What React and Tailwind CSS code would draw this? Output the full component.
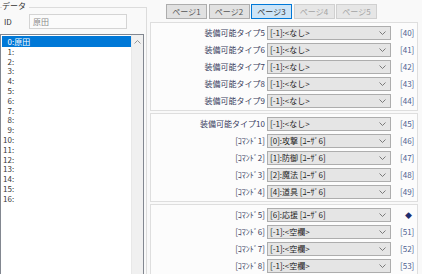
import React from "react";

const panels = [
  [
    ["装備可能タイプ5", "[-1]:<なし>", "[40]"],
    ["装備可能タイプ6", "[-1]:<なし>", "[41]"],
    ["装備可能タイプ7", "[-1]:<なし>", "[42]"],
    ["装備可能タイプ8", "[-1]:<なし>", "[43]"],
    ["装備可能タイプ9", "[-1]:<なし>", "[44]"],
  ],
  [
    ["装備可能タイプ10", "[-1]:<なし>", "[45]"],
    ["[ｺﾏﾝﾄﾞ1]", "[0]:攻撃 [ﾕｰｻﾞ6]", "[46]"],
    ["[ｺﾏﾝﾄﾞ2]", "[1]:防御 [ﾕｰｻﾞ6]", "[47]"],
    ["[ｺﾏﾝﾄﾞ3]", "[2]:魔法 [ﾕｰｻﾞ6]", "[48]"],
    ["[ｺﾏﾝﾄﾞ4]", "[4]:道具 [ﾕｰｻﾞ6]", "[49]"],
  ],
  [
    ["[ｺﾏﾝﾄﾞ5]", "[6]:応援 [ﾕｰｻﾞ6]", "◆"],
    ["[ｺﾏﾝﾄﾞ6]", "[-1]:<空欄>", "[51]"],
    ["[ｺﾏﾝﾄﾞ7]", "[-1]:<空欄>", "[52]"],
    ["[ｺﾏﾝﾄﾞ8]", "[-1]:<空欄>", "[53]"],
    ["", "", ""],
  ],
];

function Chevron({ up }) {
  return (
    <svg width="7" height="4" viewBox="0 0 7 4" className="block">
      {up ? (
        <polyline points="0.5,3.5 3.5,0.5 6.5,3.5" fill="none" stroke="#8a8a8a" strokeWidth="0.9" />
      ) : (
        <polyline points="0.5,0.5 3.5,3.5 6.5,0.5" fill="none" stroke="#6d6d6d" strokeWidth="0.9" />
      )}
    </svg>
  );
}

function Row({ label, value, idx }) {
  return (
    <div className="flex items-center h-[17px]">
      <div className="w-[114px] text-right text-[#3a3d5e] whitespace-nowrap">{label}</div>
      <div className="ml-[2px] w-[124px] h-[14px] bg-[#e5e5e5] border border-[#adadad] flex items-center pl-[2px] pr-[4px] text-[#222]">
        <span className="flex-1 whitespace-nowrap">{value}</span>
        {value && <Chevron />}
      </div>
      <div className="ml-[9px] text-[#4d5e90] whitespace-nowrap">
        {idx === "◆" ? <span className="ml-[5px] text-[#1f2d6e] text-[7px]">◆</span> : idx}
      </div>
    </div>
  );
}

export default function App() {
  const items = Array.from({ length: 17 }, (_, i) => i);
  return (
    <div className="w-[422px] h-[274px] overflow-hidden flex bg-[#f9f9f9] font-['Noto_Sans_CJK_JP','Noto_Sans',sans-serif] text-[8px] leading-none">
      {/* left group */}
      <div className="w-[147px] shrink-0 pt-[7px] relative">
        <span className="absolute top-[2px] left-[2px] bg-[#f9f9f9] pr-[3px] text-[#333]">データ</span>
        <div className="border-t border-r border-[#dcdcdc] h-[300px] flex flex-col">
          <div className="mt-[6px] flex items-center h-[15px]">
            <span className="w-[29px] pl-[4px] text-[#333]">ID</span>
            <div className="w-[98px] h-[15px] border border-[#d4d4d4] bg-[#fbfbfb] flex items-center pl-[3px] text-[#8a8a8a]">原田</div>
          </div>
          <div className="mt-[5px] w-[144px] h-[260px] border border-[#828790] bg-white flex">
            <div className="flex-1 pt-[1px] pl-[1px]">
              {items.map((i) => (
                <div
                  key={i}
                  className={
                    "h-[9.8px] flex items-center " +
                    (i === 0 ? "bg-[#0078d7] text-white h-[11px]" : "text-[#3a3a3a]")
                  }
                >
                  <span className="w-[10px] text-right">{i}</span>
                  <span>:</span>
                  {i === 0 && <span>原田</span>}
                </div>
              ))}
            </div>
            <div className="w-[12px] bg-[#f0f0f0] border-l border-[#e8e8e8] flex justify-center pt-[5px]">
              <Chevron up />
            </div>
          </div>
        </div>
      </div>

      {/* right */}
      <div className="flex-1 flex flex-col">
        <div className="pt-[4px] pl-[19px] flex gap-[1.5px]">
          {["ページ1", "ページ2", "ページ3", "ページ4", "ページ5"].map((p, i) => (
            <div
              key={p}
              className={
                "w-[41px] h-[15px] border flex items-center justify-center " +
                (i === 2
                  ? "bg-[#cce4f7] border-[#0078d7] text-[#333]"
                  : i > 2
                  ? "bg-[#e6e6e6] border-[#d0d0d0] text-[#a3a3a3]"
                  : "bg-[#e1e1e1] border-[#adadad] text-[#555]")
              }
            >
              {p}
            </div>
          ))}
        </div>
        <div className="ml-[3px] mt-[3px] w-[268px] flex flex-col gap-[2px]">
          {panels.map((rows, pi) => (
            <div key={pi} className="border border-[#dedede] bg-[#fcfcfc] py-[1px]">
              {rows.map((r, ri) => (
                <Row key={ri} label={r[0]} value={r[1]} idx={r[2]} />
              ))}
            </div>
          ))}
        </div>
      </div>
    </div>
  );
}
